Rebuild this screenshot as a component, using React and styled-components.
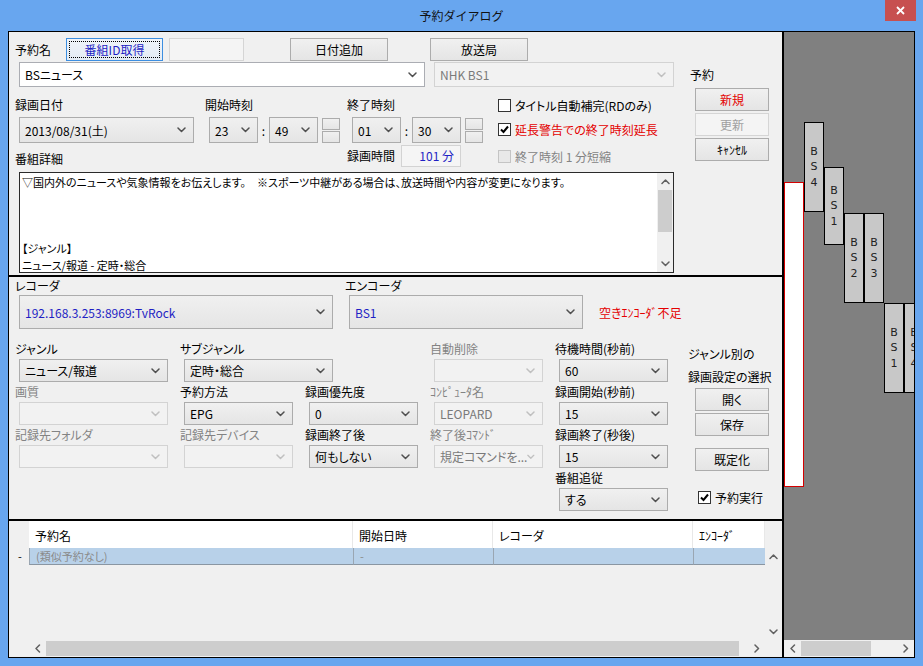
import React from "react";
import styled, { createGlobalStyle, css } from "styled-components";

const BLUE = "#1f1fc4";
const RED = "#e40000";
const DIM = "#838383";

const GlobalStyle = createGlobalStyle`
	* { box-sizing: border-box; }
	html, body { margin: 0; padding: 0; background: #fff; }
	body {
		font-family: "Noto Sans CJK JP", "Noto Sans", sans-serif;
		font-size: 12px;
		font-feature-settings: "palt";
		color: #000;
	}
`;

//=============================================================
// Window frame
//=============================================================
const Frame = styled.div`
	width: 923px;
	height: 666px;
	background: #68a6ef;
	display: flex;
	flex-direction: column;
`;

const TitleBar = styled.div`
	height: 31px;
	flex-shrink: 0;
	display: grid;
	grid-template-columns: 1fr auto 1fr;
	align-items: center;
`;

const TitleText = styled.div`
	grid-column: 2;
	font-size: 12px;
	font-feature-settings: normal;
	line-height: 31px;
	color: #111;
`;

const CloseButton = styled.div`
	grid-column: 3;
	justify-self: end;
	align-self: start;
	width: 31px;
	height: 21px;
	margin-right: 7px;
	background: #c75050;
	display: flex;
	align-items: center;
	justify-content: center;
`;

const Body = styled.div`
	flex: 1;
	min-height: 0;
	margin: 0 8px 8px;
	border: 1px solid #000;
	display: flex;
`;

const LeftPane = styled.div`
	width: 775px;
	flex-shrink: 0;
	border-right: 2px solid #000;
	background: #f0f0f0;
	display: flex;
	flex-direction: column;
`;

//=============================================================
// Common controls
//=============================================================
const Chevron = ({ dir = "down", color = "#505050" }) => {
	const vertical = dir === "down" || dir === "up";
	const points = {
		down: "1,1 4.5,4.5 8,1",
		up: "1,4.5 4.5,1 8,4.5",
		left: "4.5,1 1,4.5 4.5,8",
		right: "1,1 4.5,4.5 1,8",
	}[dir];
	return (
		<svg
			width={vertical ? 9 : 6}
			height={vertical ? 6 : 9}
			viewBox={vertical ? "0 0 9 6" : "0 0 6 9"}
			fill='none'
			stroke={color}
			strokeWidth='1.5'
			strokeLinecap='round'
			strokeLinejoin='round'>
			<polyline points={points} />
		</svg>
	);
};

const Label = styled.span`
	flex-shrink: 0;
	width: ${(p) => (p.$w ? `${p.$w}px` : "auto")};
	line-height: ${(p) => p.$lh || 20}px;
	white-space: nowrap;
	color: ${(p) => (p.$disabled ? DIM : "#000")};
`;

const PushButton = styled.button`
	flex-shrink: 0;
	width: ${(p) => p.$w || 74}px;
	height: 23px;
	margin: ${(p) => p.$mt || 0}px 0 0 ${(p) => p.$ml || 0}px;
	padding: 0;
	font: inherit;
	font-size: 12px;
	line-height: 21px;
	border: 1px solid #acacac;
	background: linear-gradient(#f0f0f0, #e5e5e5);
	color: ${(p) => (p.$tone === "red" ? RED : p.$tone === "blue" ? BLUE : "#000")};
	${(p) =>
		p.$focus &&
		css`
			border-color: #3c8ee0;
			background: linear-gradient(#f0f4f9, #e3ebf4);
			outline: 1px dotted #000;
			outline-offset: -4px;
		`}
	&:disabled {
		border-color: #d5d5d5;
		background: #f4f4f4;
		color: #a0a0a0;
	}
`;

const SideButton = styled(PushButton)`
	width: 74px;
`;

const ComboShell = styled.div`
	flex-shrink: 0;
	width: ${(p) => p.$w}px;
	height: ${(p) => p.$h || 23}px;
	margin-left: ${(p) => p.$ml ?? 4}px;
	padding: 0 7px 0 5px;
	display: flex;
	align-items: center;
	justify-content: space-between;
	white-space: nowrap;
	border: 1px solid #acacac;
	background: linear-gradient(#f0f0f0, #e5e5e5);
	color: ${(p) => (p.$blue ? BLUE : "#000")};
	${(p) =>
		p.$edit &&
		css`
			background: #fff;
			border-color: #abadb3;
		`}
	${(p) =>
		p.$disabled &&
		css`
			background: #f2f2f2;
			border-color: #d3d3d3;
			color: #7a7a7a;
		`}
`;

const Combo = ({ children, ...rest }) => (
	<ComboShell {...rest}>
		<span>{children}</span>
		<Chevron color={rest.$disabled ? "#c0c0c0" : "#505050"} />
	</ComboShell>
);

const CheckRow = styled.div`
	display: flex;
	align-items: center;
	gap: 4px;
	white-space: nowrap;
	margin-left: ${(p) => p.$ml || 0}px;
	color: ${(p) => (p.$disabled ? DIM : p.$tone === "red" ? RED : "#000")};
`;

const CheckBox = styled.span`
	width: 13px;
	height: 13px;
	flex-shrink: 0;
	border: 1px solid #333;
	background: #fff;
	display: flex;
	align-items: center;
	justify-content: center;
	${(p) =>
		p.$disabled &&
		css`
			border-color: #c4c4c4;
			background: #e8e8e8;
		`}
`;

const Check = ({ label, checked, disabled, tone, ml }) => (
	<CheckRow $disabled={disabled} $tone={tone} $ml={ml}>
		<CheckBox $disabled={disabled}>
			{checked && (
				<svg width='9' height='9' viewBox='0 0 9 9' fill='none' stroke='#000' strokeWidth='2'>
					<polyline points='1,4.5 3.5,7 8,1.5' />
				</svg>
			)}
		</CheckBox>
		<span>{label}</span>
	</CheckRow>
);

const ScrollTrack = styled.div`
	display: flex;
	flex-direction: ${(p) => (p.$vertical ? "column" : "row")};
	background: #f0f0f0;
	${(p) => (p.$vertical ? "height: 100%;" : "flex: 1;")}
	${(p) => p.$width && `width: ${p.$width}px; flex: none;`}
	${(p) => p.$fixed && "flex: none; height: 17px;"}
`;

const ScrollArrow = styled.div`
	width: ${(p) => p.$w || 17}px;
	height: 17px;
	flex-shrink: 0;
	display: flex;
	align-items: center;
	justify-content: center;
`;

const ScrollThumb = styled.div`
	background: #cdcdcd;
	${(p) =>
		p.$vertical
			? css`
					height: ${p.$size}px;
					margin: 0 1px;
			  `
			: css`
					width: ${p.$size ? `${p.$size}px` : "auto"};
					flex: ${p.$size ? "none" : 1};
					margin: 1px ${p.$gap || 0}px 1px 0;
			  `}
`;

const Spacer = styled.div`
	flex: 1;
`;

//=============================================================
// Top section
//=============================================================
const TopSection = styled.section`
	height: 245px;
	flex-shrink: 0;
	border-bottom: 2px solid #000;
	display: flex;
`;

const MainCol = styled.div`
	width: 681px;
	padding: 6px 0 0 6px;
	display: flex;
	flex-direction: column;
`;

const SideCol = styled.div`
	flex: 1;
	padding-top: 33px;
	display: flex;
	flex-direction: column;
	align-items: flex-start;
`;

const Row = styled.div`
	display: flex;
	align-items: center;
	height: ${(p) => p.$h}px;
	margin-top: ${(p) => p.$mt || 0}px;
`;

const DetailGrid = styled.div`
	margin-top: 8px;
	display: grid;
	grid-template-columns: 190px 142px 151px 1fr;
	grid-template-rows: 20px 28px 26px;
	align-items: center;
	& > .end {
		align-self: end;
	}
`;

const TimeGroup = styled.div`
	display: flex;
	align-items: center;
	margin-left: ${(p) => p.$ml}px;
`;

const Colon = styled.span`
	width: 11px;
	text-align: center;
	flex-shrink: 0;
`;

const Spinner = styled.div`
	display: flex;
	flex-direction: column;
	gap: 1px;
	margin-left: 4px;
`;

const SpinPart = styled.div`
	width: 18px;
	height: 12px;
	border: 1px solid #acacac;
	background: linear-gradient(#f0f0f0, #e5e5e5);
`;

const TimePicker = ({ hour, min, ml }) => (
	<TimeGroup $ml={ml}>
		<Combo $w={49} $h={26} $ml={0}>
			{hour}
		</Combo>
		<Colon>:</Colon>
		<Combo $w={49} $h={26} $ml={0}>
			{min}
		</Combo>
		<Spinner>
			<SpinPart />
			<SpinPart />
		</Spinner>
	</TimeGroup>
);

const DurationBox = styled.div`
	width: 60px;
	height: 22px;
	border: 1px solid #d3d3d3;
	background: #f5f5f5;
	color: ${BLUE};
	text-align: right;
	padding-right: 6px;
	line-height: 20px;
`;

const DetailBox = styled.div`
	width: 655px;
	height: 101px;
	margin: 3px 0 0 4px;
	border: 1px solid #2a2a2a;
	background: #fff;
	display: flex;
`;

const DetailText = styled.div`
	flex: 1;
	padding: 1px 0 0 2px;
	font-size: 11px;
	line-height: 16.5px;
	white-space: pre;
	overflow: hidden;
`;

const DETAIL =
	"▽国内外のニュースや気象情報をお伝えします。　※スポーツ中継がある場合は、放送時間や内容が変更になります。\n\n\n\n【ジャンル】\nニュース/報道 - 定時・総合";

//=============================================================
// Middle section
//=============================================================
const MidSection = styled.section`
	height: 244px;
	flex-shrink: 0;
	border-bottom: 2px solid #000;
	padding-left: 6px;
	display: flex;
	flex-direction: column;
`;

const MidTop = styled.div`
	display: flex;
`;

const Field = styled.div`
	display: flex;
	flex-direction: column;
	align-items: flex-start;
	width: ${(p) => (p.$w ? `${p.$w}px` : "auto")};
	grid-column: ${(p) => p.$col || "auto"};
	grid-row: ${(p) => p.$row || "auto"};
`;

const Note = styled.span`
	margin-left: 16px;
	color: ${RED};
	white-space: nowrap;
`;

const FieldGrid = styled.div`
	margin-top: 10px;
	display: grid;
	grid-template-columns: 165px 125px 125px 125px 133px 1fr;
	grid-template-rows: repeat(4, 43px);
`;

const GenreSide = styled.div`
	grid-column: 6;
	grid-row: 1 / span 4;
	padding-top: 3px;
	display: flex;
	flex-direction: column;
	align-items: flex-start;
`;

const FormField = ({ col, row, label, w = 109, value, disabled }) => (
	<Field $col={col} $row={row}>
		<Label $disabled={disabled}>{label}</Label>
		<Combo $w={w} $disabled={disabled}>
			{value}
		</Combo>
	</Field>
);

//=============================================================
// List section
//=============================================================
const ListSection = styled.section`
	flex: 1;
	min-height: 0;
	display: grid;
	grid-template-columns: 756px 17px;
	grid-template-rows: 27px 1fr 17px;
`;

const HeaderRow = styled.div`
	display: flex;
`;

const RowHead = styled.div`
	width: 20px;
	flex-shrink: 0;
	padding-left: 9px;
	line-height: 16px;
	font-size: 11px;
`;

const HeadCell = styled.div`
	width: ${(p) => p.$w}px;
	flex-shrink: 0;
	background: #fff;
	border-right: 1px solid #e8e8e8;
	padding: 5px 0 0 6px;
	line-height: 20px;
	white-space: nowrap;
`;

const ListBody = styled.div`
	background: #f0f0f0;
`;

const DataRow = styled.div`
	display: flex;
	height: 17px;
`;

const DataCell = styled.div`
	width: ${(p) => p.$w}px;
	flex-shrink: 0;
	background: #b8d1e9;
	border-left: 1px solid #9aa6b2;
	border-bottom: 1px solid #8a96a2;
	padding-left: 6px;
	font-size: 11px;
	line-height: 16px;
	color: #8a8a8a;
	white-space: nowrap;
`;

const HScrollRow = styled.div`
	display: flex;
`;

const Blank = styled.div`
	width: ${(p) => p.$w || 0}px;
	background: #f0f0f0;
`;

//=============================================================
// Right timeline pane
//=============================================================
const RightPane = styled.div`
	flex: 1;
	min-width: 0;
	background: #808080;
	display: flex;
	flex-direction: column;
`;

const Timeline = styled.div`
	flex: 1;
	position: relative;
	overflow: hidden;
`;

const NowBar = styled.div`
	position: absolute;
	left: 0;
	top: 150px;
	width: 20px;
	height: 305px;
	background: #fff;
	border: 1px solid #d40000;
`;

const SlotBlock = styled.div`
	position: absolute;
	left: ${(p) => p.$x}px;
	top: ${(p) => p.$y}px;
	width: 20px;
	height: ${(p) => p.$h}px;
	background: #c8c8c8;
	border: 1px solid #000;
	display: flex;
	flex-direction: column;
	align-items: center;
	justify-content: center;
	font-family: "DejaVu Sans", sans-serif;
	font-size: 11px;
	line-height: 15.5px;
	color: #222;
`;

const SLOTS = [
	{ x: 20, y: 90, h: 90, ch: "4" },
	{ x: 40, y: 135, h: 78, ch: "1" },
	{ x: 60, y: 181, h: 90, ch: "2" },
	{ x: 80, y: 181, h: 90, ch: "3" },
	{ x: 100, y: 271, h: 90, ch: "1" },
	{ x: 120, y: 271, h: 90, ch: "4" },
];

export default function App() {
	return (
		<>
			<GlobalStyle />
			<Frame>
				<TitleBar>
					<TitleText>予約ダイアログ</TitleText>
					<CloseButton>
						<svg width='9' height='9' viewBox='0 0 9 9' stroke='#fff' strokeWidth='1.8'>
							<line x1='1' y1='1' x2='8' y2='8' />
							<line x1='8' y1='1' x2='1' y2='8' />
						</svg>
					</CloseButton>
				</TitleBar>
				<Body>
					<LeftPane>
						<TopSection>
							<MainCol>
								<Row $h={23}>
									<Label $w={51}>予約名</Label>
									<PushButton $w={97} $tone='blue' $focus>
										番組ID取得
									</PushButton>
									<PushButton $w={75} $ml={6} disabled />
									<PushButton $w={98} $ml={46}>
										日付追加
									</PushButton>
									<PushButton $w={98} $ml={42}>
										放送局
									</PushButton>
								</Row>
								<Row $h={25} $mt={1}>
									<Combo $w={406} $h={25} $edit>
										BSニュース
									</Combo>
									<Combo $w={240} $h={25} $ml={9} $disabled>
										NHK BS1
									</Combo>
								</Row>
								<DetailGrid>
									<Label>録画日付</Label>
									<Label>開始時刻</Label>
									<Label>終了時刻</Label>
									<Check label='タイトル自動補完(RDのみ)' />

									<div className='end'>
										<Combo $w={175} $h={26}>
											2013/08/31(土)
										</Combo>
									</div>
									<div className='end'>
										<TimePicker ml={4} hour='23' min='49' />
									</div>
									<div className='end'>
										<TimePicker ml={5} hour='01' min='30' />
									</div>
									<Check checked tone='red' label='延長警告での終了時刻延長' />

									<Label className='end'>番組詳細</Label>
									<div />
									<Row $h={26}>
										<Label $w={54}>録画時間</Label>
										<DurationBox>101 分</DurationBox>
									</Row>
									<Check disabled label='終了時刻 1 分短縮' />
								</DetailGrid>
								<DetailBox>
									<DetailText>{DETAIL}</DetailText>
									<ScrollTrack $vertical $width={16}>
										<ScrollArrow $w={16}>
											<Chevron dir='up' color='#606060' />
										</ScrollArrow>
										<ScrollThumb $vertical $size={42} />
										<Spacer />
										<ScrollArrow $w={16}>
											<Chevron dir='down' color='#606060' />
										</ScrollArrow>
									</ScrollTrack>
								</DetailBox>
							</MainCol>
							<SideCol>
								<Label>予約</Label>
								<SideButton $tone='red' $mt={3} $ml={5}>
									新規
								</SideButton>
								<SideButton disabled $mt={2} $ml={5}>
									更新
								</SideButton>
								<SideButton $mt={2} $ml={5}>
									ｷｬﾝｾﾙ
								</SideButton>
							</SideCol>
						</TopSection>

						<MidSection>
							<MidTop>
								<Field $w={330}>
									<Label $lh={18}>レコーダ</Label>
									<Combo $w={314} $h={34} $blue>
										192.168.3.253:8969:TvRock
									</Combo>
								</Field>
								<Field>
									<Label $lh={18}>エンコーダ</Label>
									<Row $h={34}>
										<Combo $w={234} $h={34} $blue>
											BS1
										</Combo>
										<Note>空きｴﾝｺｰﾀﾞ不足</Note>
									</Row>
								</Field>
							</MidTop>
							<FieldGrid>
								<FormField col='1' row='1' label='ジャンル' w={149} value='ニュース/報道' />
								<FormField col='2 / span 2' row='1' label='サブジャンル' w={149} value='定時・総合' />
								<FormField col='4' row='1' label='自動削除' disabled />
								<FormField col='5' row='1' label='待機時間(秒前)' value='60' />

								<FormField col='1' row='2' label='画質' w={149} disabled />
								<FormField col='2' row='2' label='予約方法' value='EPG' />
								<FormField col='3' row='2' label='録画優先度' value='0' />
								<FormField col='4' row='2' label='ｺﾝﾋﾟｭｰﾀ名' value='LEOPARD' disabled />
								<FormField col='5' row='2' label='録画開始(秒前)' value='15' />

								<FormField col='1' row='3' label='記録先フォルダ' w={149} disabled />
								<FormField col='2' row='3' label='記録先デバイス' disabled />
								<FormField col='3' row='3' label='録画終了後' value='何もしない' />
								<FormField col='4' row='3' label='終了後ｺﾏﾝﾄﾞ' value='規定コマンドを...' disabled />
								<FormField col='5' row='3' label='録画終了(秒後)' value='15' />

								<FormField col='5' row='4' label='番組追従' value='する' />

								<GenreSide>
									<Label $lh={23}>ジャンル別の</Label>
									<Label $lh={23}>録画設定の選択</Label>
									<SideButton $ml={7}>開く</SideButton>
									<SideButton $ml={7} $mt={2}>
										保存
									</SideButton>
									<SideButton $ml={7} $mt={12}>
										既定化
									</SideButton>
									<Row $h={22} $mt={15}>
										<Check checked ml={10} label='予約実行' />
									</Row>
								</GenreSide>
							</FieldGrid>
						</MidSection>

						<ListSection>
							<HeaderRow>
								<Blank $w={20} />
								<HeadCell $w={324}>予約名</HeadCell>
								<HeadCell $w={140}>開始日時</HeadCell>
								<HeadCell $w={200}>レコーダ</HeadCell>
								<HeadCell $w={72}>ｴﾝｺｰﾀﾞ</HeadCell>
							</HeaderRow>
							<Blank />
							<ListBody>
								<DataRow>
									<RowHead>-</RowHead>
									<DataCell $w={324}>(類似予約なし)</DataCell>
									<DataCell $w={140}>-</DataCell>
									<DataCell $w={200} />
									<DataCell $w={72} />
								</DataRow>
							</ListBody>
							<ScrollTrack $vertical>
								<ScrollArrow>
									<Chevron dir='up' color='#606060' />
								</ScrollArrow>
								<Spacer />
								<ScrollArrow>
									<Chevron dir='down' color='#606060' />
								</ScrollArrow>
							</ScrollTrack>
							<HScrollRow>
								<Blank $w={20} />
								<ScrollTrack>
									<ScrollArrow>
										<Chevron dir='left' color='#606060' />
									</ScrollArrow>
									<ScrollThumb $gap={9} />
									<ScrollArrow>
										<Chevron dir='right' color='#606060' />
									</ScrollArrow>
								</ScrollTrack>
							</HScrollRow>
							<Blank />
						</ListSection>
					</LeftPane>

					<RightPane>
						<Timeline>
							<NowBar />
							{SLOTS.map((s, i) => (
								<SlotBlock key={i} $x={s.x} $y={s.y} $h={s.h}>
									<span>B</span>
									<span>S</span>
									<span>{s.ch}</span>
								</SlotBlock>
							))}
						</Timeline>
						<ScrollTrack $fixed>
							<ScrollArrow>
								<Chevron dir='left' color='#606060' />
							</ScrollArrow>
							<ScrollThumb $size={70} />
							<Spacer />
							<ScrollArrow>
								<Chevron dir='right' color='#606060' />
							</ScrollArrow>
						</ScrollTrack>
					</RightPane>
				</Body>
			</Frame>
		</>
	);
}
